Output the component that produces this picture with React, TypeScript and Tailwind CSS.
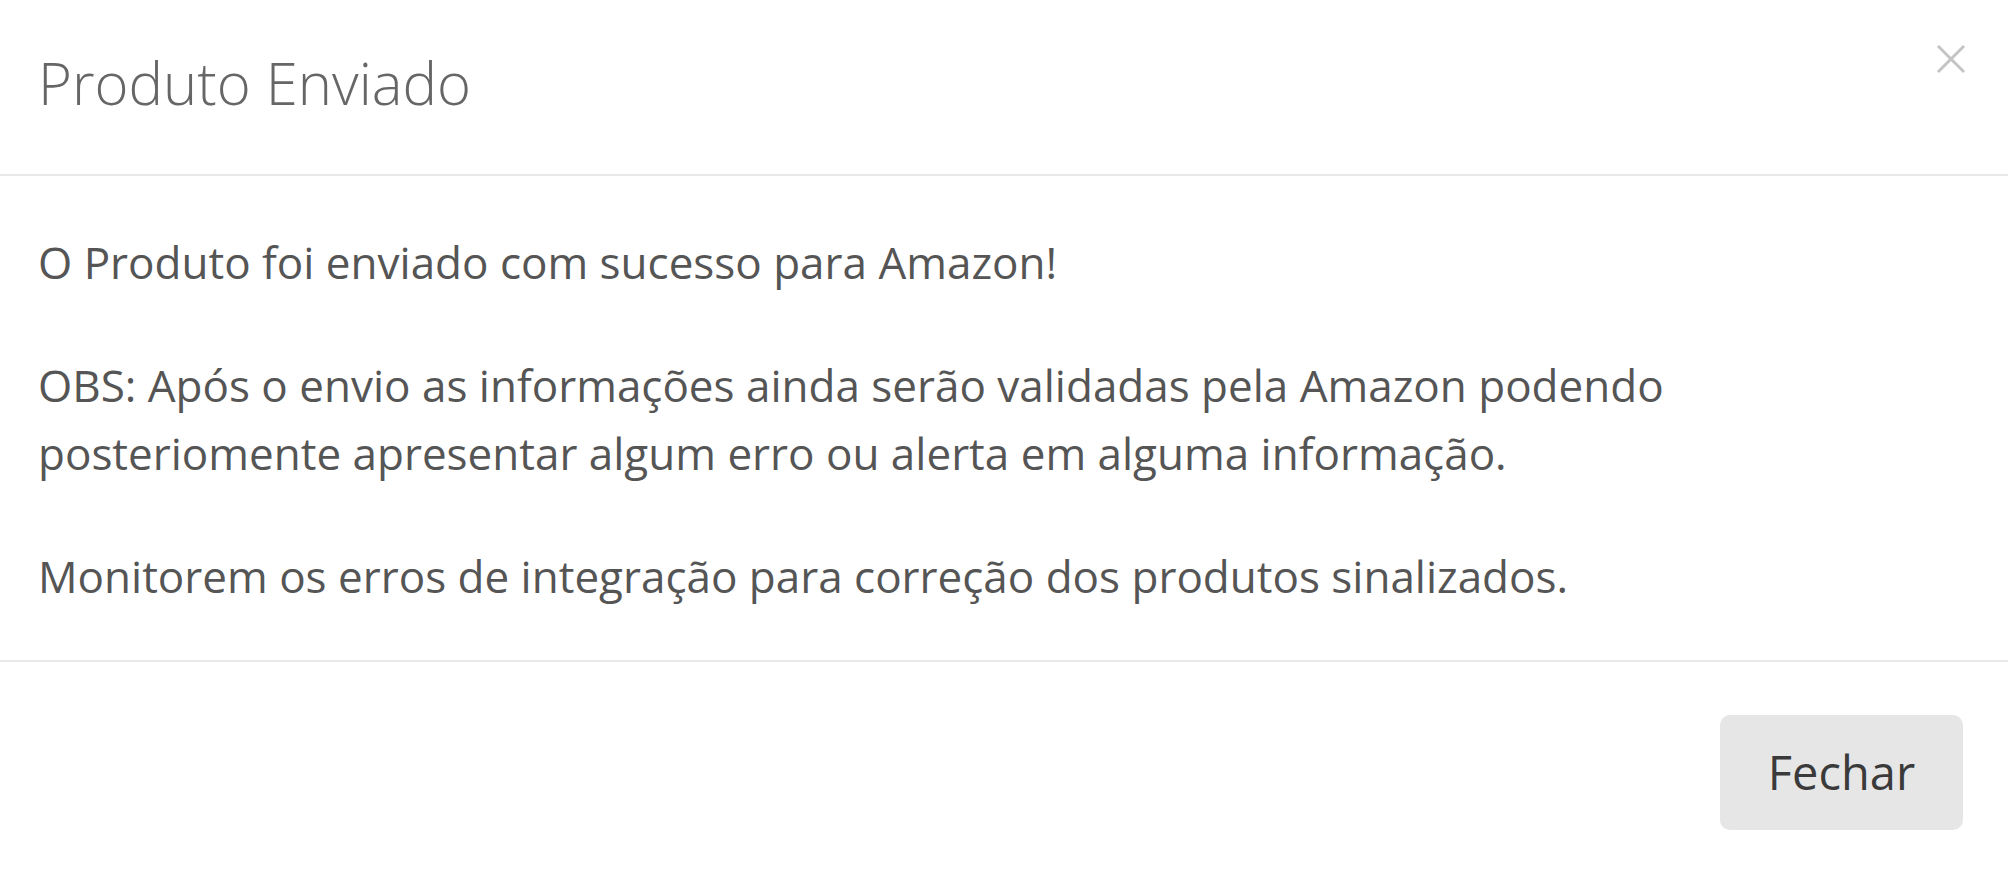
export default function App() {
  return (
    <div className="w-[2008px] h-[873px] bg-white text-[#555] overflow-hidden" style={{ fontFamily: '"Open Sans", "Noto Sans", sans-serif' }}>
      {/* Header */}
      <div className="relative h-[176px] border-b-2 border-[#e8e8e8] px-[38px] pt-[54px]">
        <h4 className="text-[58px] leading-[58px] font-light text-[#666]">Produto Enviado</h4>
        <button className="absolute right-[40px] top-[42px] text-[#c4c4c4]" aria-label="Fechar">
          <svg width="34" height="34" viewBox="0 0 34 34" fill="none" stroke="currentColor" strokeWidth="3">
            <path d="M4 4 L30 30 M30 4 L4 30" />
          </svg>
        </button>
      </div>

      {/* Body */}
      <div className="h-[486px] border-b-2 border-[#e8e8e8] px-[38px] pt-[52px] text-[44px] leading-[68px]">
        <p>O Produto foi enviado com sucesso para Amazon!</p>
        <p className="mt-[55px]">
          OBS: Após o envio as informações ainda serão validadas pela Amazon podendo
          <br />
          posteriomente apresentar algum erro ou alerta em alguma informação.
        </p>
        <p className="mt-[55px]">Monitorem os erros de integração para correção dos produtos sinalizados.</p>
      </div>

      {/* Footer */}
      <div className="flex justify-end px-[45px] pt-[53px]">
        <button className="w-[243px] h-[115px] rounded-[10px] bg-[#e6e6e6] text-[47px] text-[#3a3a3a]">Fechar</button>
      </div>
    </div>
  );
}
